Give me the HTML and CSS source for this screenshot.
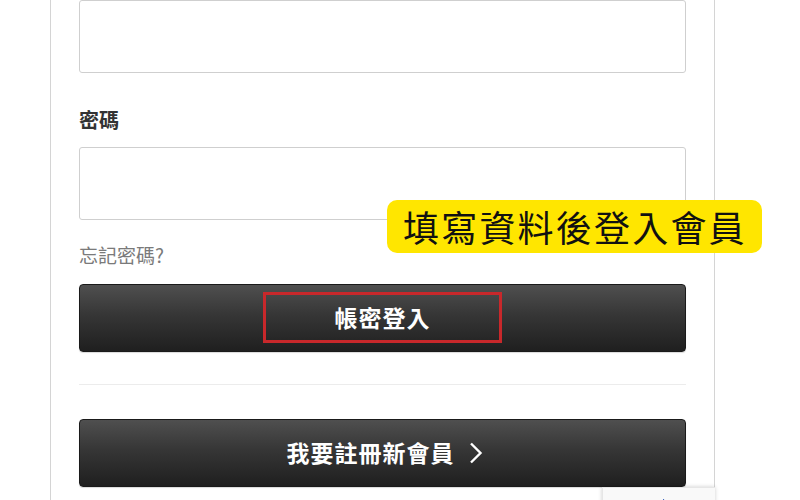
FILE: index.html
```html
<!DOCTYPE html>
<html lang="zh-Hant">
<head>
<meta charset="utf-8">
<link rel="stylesheet" href="styles.css">
</head>
<body>
<div class="page">
  <div class="panel">
    <input class="field field-first" type="text">
    <div class="label">密碼</div>
    <input class="field" type="password">
    <a class="forgot">忘記密碼?</a>
    <button class="btn btn-login"><span>帳密登入</span></button>
    <div class="divider"></div>
    <button class="btn btn-register"><span>我要註冊新會員</span>
      <svg class="chev" width="14" height="22" viewBox="0 0 14 22"><path d="M2 1.5 L11.5 11 L2 20.5" fill="none" stroke="#fff" stroke-width="2.4"/></svg>
    </button>
  </div>
  <div class="mark"></div>
  <div class="tag">填寫資料後登入會員</div>
  <div class="recaptcha">
    <svg width="44" height="14" viewBox="0 0 44 14"><path d="M2 14 C4 10 10 8 18 8 L30 8 L30 4 L40 11 L38 14 Z" fill="#4a90e2"/><path d="M18 8 L30 8 L30 4 L36 8.5 Z" fill="#1c3aa9"/></svg>
  </div>
</div>
</body>
</html>
```

FILE: styles.css
```css
* { box-sizing: border-box; }
html, body { margin: 0; padding: 0; background: #fff; }
body {
  font-family: "Noto Sans CJK TC", "Noto Sans", sans-serif;
  width: 800px;
  height: 500px;
  overflow: hidden;
}
.page {
  position: relative;
  width: 800px;
  height: 500px;
}
.panel {
  margin-left: 50px;
  width: 665px;
  height: 500px;
  border-left: 1px solid #d4d4d4;
  border-right: 1px solid #d4d4d4;
  padding: 0 28px;
  display: flex;
  flex-direction: column;
}
.field {
  display: block;
  width: 607px;
  height: 73px;
  border: 1px solid #cfcfcf;
  border-radius: 3px;
  background: #fff;
  margin: 0;
}
.field-first { margin-top: 0; }
.label {
  margin-top: 33px;
  font-size: 20px;
  line-height: 28px;
  font-weight: 700;
  color: #333;
  margin-bottom: 13px;
}
.forgot {
  margin-top: 21px;
  font-size: 19px;
  line-height: 28px;
  color: #7a7a7a;
}
.btn {
  display: flex;
  align-items: center;
  justify-content: center;
  gap: 14px;
  width: 607px;
  height: 68px;
  border: 1px solid #1a1a1a;
  border-radius: 4px;
  background: linear-gradient(to bottom, #4f4f4f 0%, #363636 45%, #1f1f1f 100%);
  color: #fff;
  font-family: "Noto Sans CJK TC", sans-serif;
  font-size: 23px;
  font-weight: 700;
  letter-spacing: 1px;
  padding: 0 0 2px 0;
  box-shadow: 0 1px 1px rgba(0,0,0,0.15);
}
.btn-login { margin-top: 15px; }
.btn-register { margin-top: 34px; padding-left: 4px; }
.chev { margin-top: 2px; }
.divider {
  margin-top: 32px;
  height: 1px;
  background: #ececec;
}
.mark {
  position: absolute;
  left: 263px;
  top: 292px;
  width: 239px;
  height: 51px;
  border: 3px solid #c8282b;
}
.tag {
  position: absolute;
  left: 387px;
  top: 200px;
  width: 375px;
  height: 53px;
  background: #ffe600;
  border-radius: 10px;
  font-family: "Noto Sans CJK TC", sans-serif;
  font-size: 36px;
  line-height: 53px;
  letter-spacing: 2.2px;
  padding-left: 16px;
  color: #111;
}
.recaptcha {
  position: absolute;
  left: 602px;
  top: 487px;
  width: 113px;
  height: 30px;
  background: #f9f9f9;
  border-top: 1px solid #e6e6e6;
  border-left: 1px solid #e6e6e6;
  box-shadow: 0 0 4px rgba(0,0,0,0.2);
  padding: 7px 0 0 30px;
}
.recaptcha svg { display: block; }
```
